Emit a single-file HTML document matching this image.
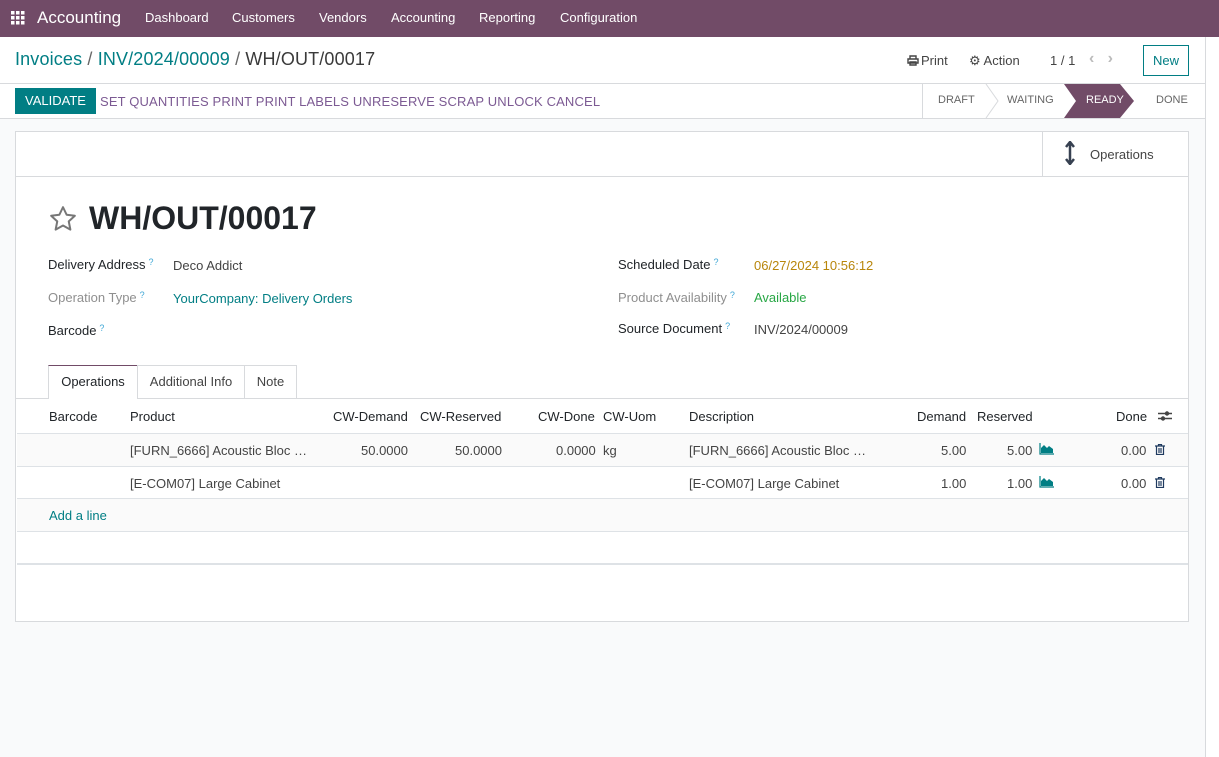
<!DOCTYPE html>
<html><head><meta charset="utf-8"><style>
*{box-sizing:border-box;margin:0;padding:0}
body{width:1219px;height:757px;overflow:hidden;background:#f9fafb;font-family:"Liberation Sans",Arial,sans-serif;font-size:13px;color:#212529;position:relative}
.a{position:absolute;white-space:nowrap}
.nav{position:absolute;left:0;top:0;width:1219px;height:37px;background:#714b67;color:#fff}
.nav span{position:absolute;top:10px;font-size:13px}
.teal{color:#017e84}
.pur{color:#7c5a93}
.muted{color:#8f8f8f}
.q{color:#3fa7d6;font-size:9px;vertical-align:top;margin-left:3px}
.row{position:absolute;left:17px;width:1171px;border-bottom:1px solid #dee2e6}
</style></head><body>
<div class="nav">
<svg class="a" style="left:11px;top:11px" width="14" height="14" viewBox="0 0 14 14" fill="#fff"><rect x="0" y="0" width="3.5" height="3.5"/><rect x="5" y="0" width="3.5" height="3.5"/><rect x="10" y="0" width="3.5" height="3.5"/><rect x="0" y="5" width="3.5" height="3.5"/><rect x="5" y="5" width="3.5" height="3.5"/><rect x="10" y="5" width="3.5" height="3.5"/><rect x="0" y="10" width="3.5" height="3.5"/><rect x="5" y="10" width="3.5" height="3.5"/><rect x="10" y="10" width="3.5" height="3.5"/></svg>
<span style="left:37px;top:8px;font-size:17px">Accounting</span>
<span style="left:145px">Dashboard</span><span style="left:232px">Customers</span><span style="left:319px">Vendors</span><span style="left:391px">Accounting</span><span style="left:479px">Reporting</span><span style="left:560px">Configuration</span>
</div>
<div class="a" style="left:0;top:37px;width:1205px;height:82px;background:#fff;border-bottom:1px solid #d8dadd"></div>
<div class="a" style="left:0;top:83px;width:1205px;height:1px;background:#d8dadd"></div>
<div class="a" style="left:1205px;top:37px;width:14px;height:720px;background:#fff;border-left:1px solid #d8dadd"></div>
<div class="a" style="left:15px;top:49px;font-size:18px;letter-spacing:0.15px"><span class="teal">Invoices</span> <span style="color:#666">/</span> <span class="teal">INV/2024/00009</span> <span style="color:#666">/</span> <span style="color:#3a3a3a">WH/OUT/00017</span></div>
<svg class="a" style="left:907px;top:55px" width="12" height="11"><path d="M3 4V1H9V4M1 4H11V8H1ZM3 7H9V10H3Z" fill="none" stroke="#444" stroke-width="1.4"/></svg>
<div class="a" style="left:921px;top:53px;color:#444">Print</div>
<div class="a" style="left:969px;top:53px;color:#444">&#9881; Action</div>
<div class="a" style="left:1050px;top:53px;color:#444">1 / 1</div>
<div class="a" style="left:1089px;top:50px;color:#bbb;font-size:16px;font-weight:bold">&#8249;&nbsp;&nbsp;&nbsp;&#8250;</div>
<div class="a" style="left:1143px;top:45px;width:46px;height:31px;border:1px solid #017e84;color:#017e84;text-align:center;line-height:29px">New</div>
<div class="a" style="left:15px;top:88px;width:81px;height:26px;background:#017e84;color:#fff;text-align:center;line-height:26px">VALIDATE</div>
<div class="a pur" style="left:100px;top:94px;letter-spacing:0.15px">SET QUANTITIES PRINT PRINT LABELS UNRESERVE SCRAP UNLOCK CANCEL</div>
<div class="a" style="left:922px;top:84px;width:1px;height:34px;background:#d8dadd"></div>
<svg class="a" style="left:922px;top:84px" width="283" height="34"><polyline points="64,0 76,17 64,34" fill="none" stroke="#d8dadd"/><polygon points="142,0 198,0 212,17 198,34 142,34 154,17" fill="#714b67"/></svg>
<div class="a" style="left:938px;top:94px;font-size:11px;color:#666">DRAFT</div>
<div class="a" style="left:1007px;top:94px;font-size:11px;color:#666">WAITING</div>
<div class="a" style="left:1086px;top:94px;font-size:11px;color:#fff">READY</div>
<div class="a" style="left:1156px;top:94px;font-size:11px;color:#666">DONE</div>
<div class="a" style="left:15px;top:131px;width:1174px;height:491px;background:#fff;border:1px solid #d8dadd"></div>
<div class="a" style="left:16px;top:176px;width:1172px;height:1px;background:#d8dadd"></div>
<div class="a" style="left:1042px;top:132px;width:1px;height:44px;background:#d8dadd"></div>
<svg class="a" style="left:1064px;top:141px" width="12" height="24"><path d="M6 2V22M2 6L6 1L10 6M2 18L6 23L10 18" stroke="#374151" stroke-width="2.5" fill="none"/></svg>
<div class="a" style="left:1090px;top:147px;color:#444">Operations</div>
<svg class="a" style="left:48px;top:204px" width="30" height="30" viewBox="0 0 24 24"><path d="M12 2.5l2.9 6.1 6.6.8-4.9 4.5 1.3 6.6L12 17.2 6.1 20.5l1.3-6.6L2.5 9.4l6.6-.8z" fill="none" stroke="#777" stroke-width="1.6" stroke-linejoin="round"/></svg>
<div class="a" style="left:89px;top:200px;font-size:32px;font-weight:bold;color:#212529">WH/OUT/00017</div>
<div class="a" style="left:48px;top:257px">Delivery Address<span class="q">?</span></div>
<div class="a" style="left:173px;top:258px;color:#444">Deco Addict</div>
<div class="a muted" style="left:48px;top:290px">Operation Type<span class="q">?</span></div>
<div class="a teal" style="left:173px;top:291px">YourCompany: Delivery Orders</div>
<div class="a" style="left:48px;top:323px">Barcode<span class="q">?</span></div>
<div class="a" style="left:618px;top:257px">Scheduled Date<span class="q">?</span></div>
<div class="a" style="left:754px;top:258px;color:#b8860b">06/27/2024 10:56:12</div>
<div class="a muted" style="left:618px;top:290px">Product Availability<span class="q">?</span></div>
<div class="a" style="left:754px;top:290px;color:#28a745">Available</div>
<div class="a" style="left:618px;top:321px">Source Document<span class="q">?</span></div>
<div class="a" style="left:754px;top:322px;color:#444">INV/2024/00009</div>
<div class="a" style="left:16px;top:398px;width:1172px;height:1px;background:#d8dadd"></div>
<div class="a" style="left:48px;top:365px;width:90px;height:34px;background:#fff;border:1px solid #d8dadd;border-top-color:#714b67;border-bottom:none;text-align:center;line-height:32px">Operations</div>
<div class="a" style="left:137px;top:365px;width:108px;height:33px;border:1px solid #d8dadd;border-bottom:none;text-align:center;line-height:32px;color:#444">Additional Info</div>
<div class="a" style="left:244px;top:365px;width:53px;height:33px;border:1px solid #d8dadd;border-bottom:none;text-align:center;line-height:32px;color:#444">Note</div>
<div class="row" style="top:399px;height:35px"></div>
<div class="row" style="top:434px;height:33px;background:#fafafa"></div>
<div class="row" style="top:467px;height:32px"></div>
<div class="row" style="top:499px;height:33px;background:#fafafa"></div>
<div class="a" style="left:17px;top:563px;width:1171px;height:2px;background:#dee2e6"></div>
<div class="a" style="left:49px;top:409px">Barcode</div>
<div class="a" style="left:130px;top:409px">Product</div>
<div class="a" style="left:333px;top:409px">CW-Demand</div>
<div class="a" style="left:420px;top:409px">CW-Reserved</div>
<div class="a" style="left:538px;top:409px">CW-Done</div>
<div class="a" style="left:603px;top:409px">CW-Uom</div>
<div class="a" style="left:689px;top:409px">Description</div>
<div class="a" style="left:917px;top:409px">Demand</div>
<div class="a" style="left:977px;top:409px">Reserved</div>
<div class="a" style="left:1116px;top:409px">Done</div>
<svg class="a" style="left:1158px;top:410px" width="14" height="12"><path d="M0 3.5H14M0 8.5H14" stroke="#444" stroke-width="1.4"/><circle cx="9" cy="3.5" r="2.2" fill="#444"/><circle cx="5" cy="8.5" r="2.2" fill="#444"/></svg>
<div class="a" style="left:130px;top:443px;color:#444">[FURN_6666] Acoustic Bloc …</div>
<div class="a" style="left:361px;top:443px;color:#444">50.0000</div>
<div class="a" style="left:455px;top:443px;color:#444">50.0000</div>
<div class="a" style="left:556px;top:443px;color:#444">0.0000</div>
<div class="a" style="left:603px;top:443px;color:#444">kg</div>
<div class="a" style="left:689px;top:443px;color:#444">[FURN_6666] Acoustic Bloc …</div>
<div class="a" style="left:941px;top:443px;color:#444">5.00</div>
<div class="a" style="left:1007px;top:443px;color:#444">5.00</div>
<div class="a" style="left:1121px;top:443px;color:#444">0.00</div>
<div class="a" style="left:130px;top:476px;color:#444">[E-COM07] Large Cabinet</div>
<div class="a" style="left:689px;top:476px;color:#444">[E-COM07] Large Cabinet</div>
<div class="a" style="left:941px;top:476px;color:#444">1.00</div>
<div class="a" style="left:1007px;top:476px;color:#444">1.00</div>
<div class="a" style="left:1121px;top:476px;color:#444">0.00</div>
<svg class="a" style="left:1039px;top:443px" width="16" height="12"><path d="M1 0V11H15" stroke="#017e84" stroke-width="1.2" fill="none"/><path d="M2 10L2 5L5 2L8 5L10 3L14 6L14 10Z" fill="#017e84"/></svg>
<svg class="a" style="left:1039px;top:476px" width="16" height="12"><path d="M1 0V11H15" stroke="#017e84" stroke-width="1.2" fill="none"/><path d="M2 10L2 5L5 2L8 5L10 3L14 6L14 10Z" fill="#017e84"/></svg>
<svg class="a" style="left:1155px;top:444px" width="10" height="11"><path d="M0 2H10M3.5 2V0.5H6.5V2M1.5 2.5V10.5H8.5V2.5M4 4V9M6 4V9" stroke="#1f3a5f" stroke-width="1.2" fill="none"/></svg>
<svg class="a" style="left:1155px;top:477px" width="10" height="11"><path d="M0 2H10M3.5 2V0.5H6.5V2M1.5 2.5V10.5H8.5V2.5M4 4V9M6 4V9" stroke="#1f3a5f" stroke-width="1.2" fill="none"/></svg>
<div class="a teal" style="left:49px;top:508px">Add a line</div>
</body></html>
